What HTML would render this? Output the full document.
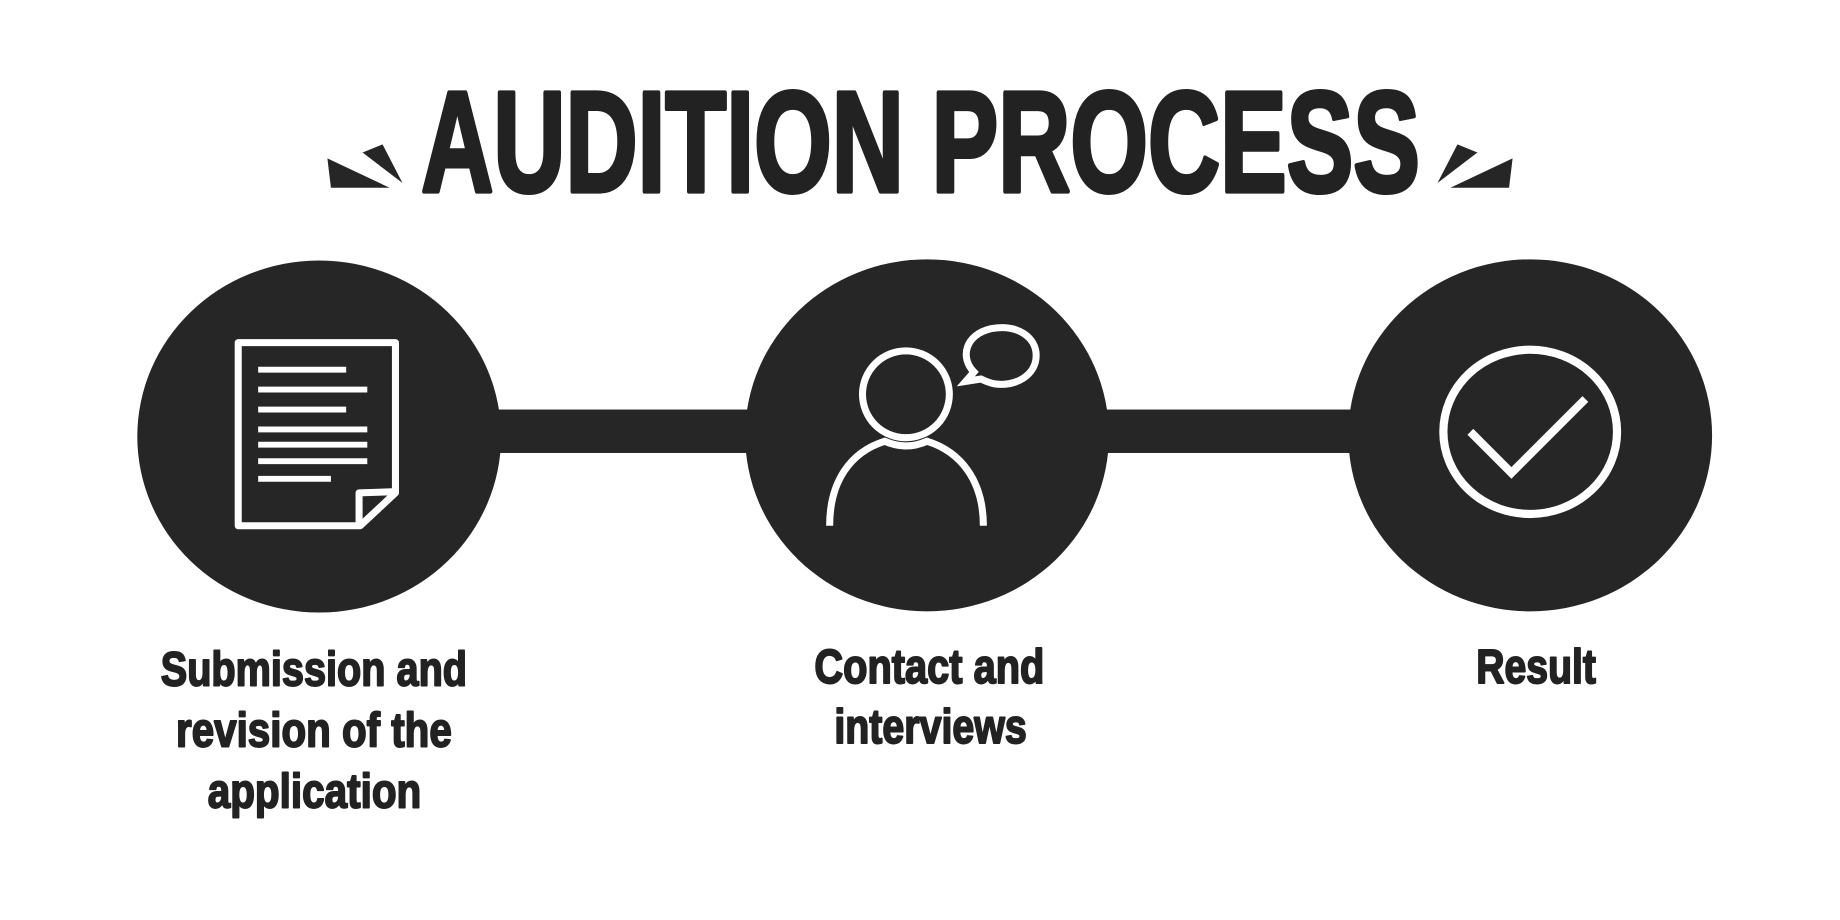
<!DOCTYPE html>
<html><head><meta charset="utf-8"><style>
html,body{margin:0;padding:0;background:#fff;width:1840px;height:920px;overflow:hidden}
svg{display:block}
text{font-family:"Liberation Sans Narrow","Liberation Sans",sans-serif;font-weight:bold;fill:#222;stroke:#222;stroke-linejoin:round}
</style></head><body>
<svg width="1840" height="920" viewBox="0 0 1568 784" preserveAspectRatio="none">
<rect width="1568" height="784" fill="#fff"/>
<text x="359" y="163" font-size="122" stroke-width="4" textLength="851" lengthAdjust="spacingAndGlyphs">AUDITION PROCESS</text>
<polygon points="279,135 332,160 282,160" fill="#262626"/>
<polygon points="309,130 326,123 343,156" fill="#262626"/>
<polygon points="1289,135 1236,160 1286,160" fill="#262626"/>
<polygon points="1259,130 1242,123 1225,156" fill="#262626"/>
<rect x="420" y="349" width="735" height="37" fill="#262626"/>
<ellipse cx="272" cy="372" rx="155" ry="150" fill="#262626"/>
<ellipse cx="790" cy="371" rx="155" ry="150" fill="#262626"/>
<ellipse cx="1304" cy="371" rx="155" ry="150" fill="#262626"/>
<g fill="none" stroke="#fff" stroke-width="6" stroke-linejoin="round">
<path d="M203,292 L337,292 L337,420 L307,448 L203,448 Z"/>
<path d="M306,447 L306,420 L337,419"/>
</g>
<g stroke="#fff" stroke-width="5">
<line x1="220" y1="315" x2="295" y2="315"/>
<line x1="220" y1="332" x2="313" y2="332"/>
<line x1="220" y1="349" x2="295" y2="349"/>
<line x1="220" y1="366" x2="313" y2="366"/>
<line x1="220" y1="379" x2="313" y2="379"/>
<line x1="220" y1="393" x2="313" y2="393"/>
<line x1="220" y1="408" x2="282" y2="408"/>
</g>
<g fill="none" stroke="#fff" stroke-width="6">
<circle cx="772" cy="336" r="37"/>
<path d="M707,448 C707,410 725,385 754,376 Q772,384 790,376 C819,385 838,410 838,448"/>
<path d="M830,317 C818,305 822,285 845,280 C868,276 883,288 883,303 C883,320 865,330 847,327 C842,326 838,324 836,323 L823,325 Z"/>
</g>
<g fill="none" stroke="#fff" stroke-width="7">
<ellipse cx="1304" cy="368" rx="74" ry="70"/>
<path d="M1253,368 L1288,403 L1351,340"/>
</g>
<g stroke-width="1.6">
<text x="137" y="584" font-size="41" textLength="261" lengthAdjust="spacingAndGlyphs">Submission and</text>
<text x="150" y="636" font-size="41" textLength="235" lengthAdjust="spacingAndGlyphs">revision of the</text>
<text x="177" y="688" font-size="41" textLength="182" lengthAdjust="spacingAndGlyphs">application</text>
<text x="694" y="582" font-size="41" textLength="196" lengthAdjust="spacingAndGlyphs">Contact and</text>
<text x="711" y="633" font-size="41" textLength="164" lengthAdjust="spacingAndGlyphs">interviews</text>
<text x="1258" y="582" font-size="41" textLength="102" lengthAdjust="spacingAndGlyphs">Result</text>
</g>
</svg>
</body></html>
